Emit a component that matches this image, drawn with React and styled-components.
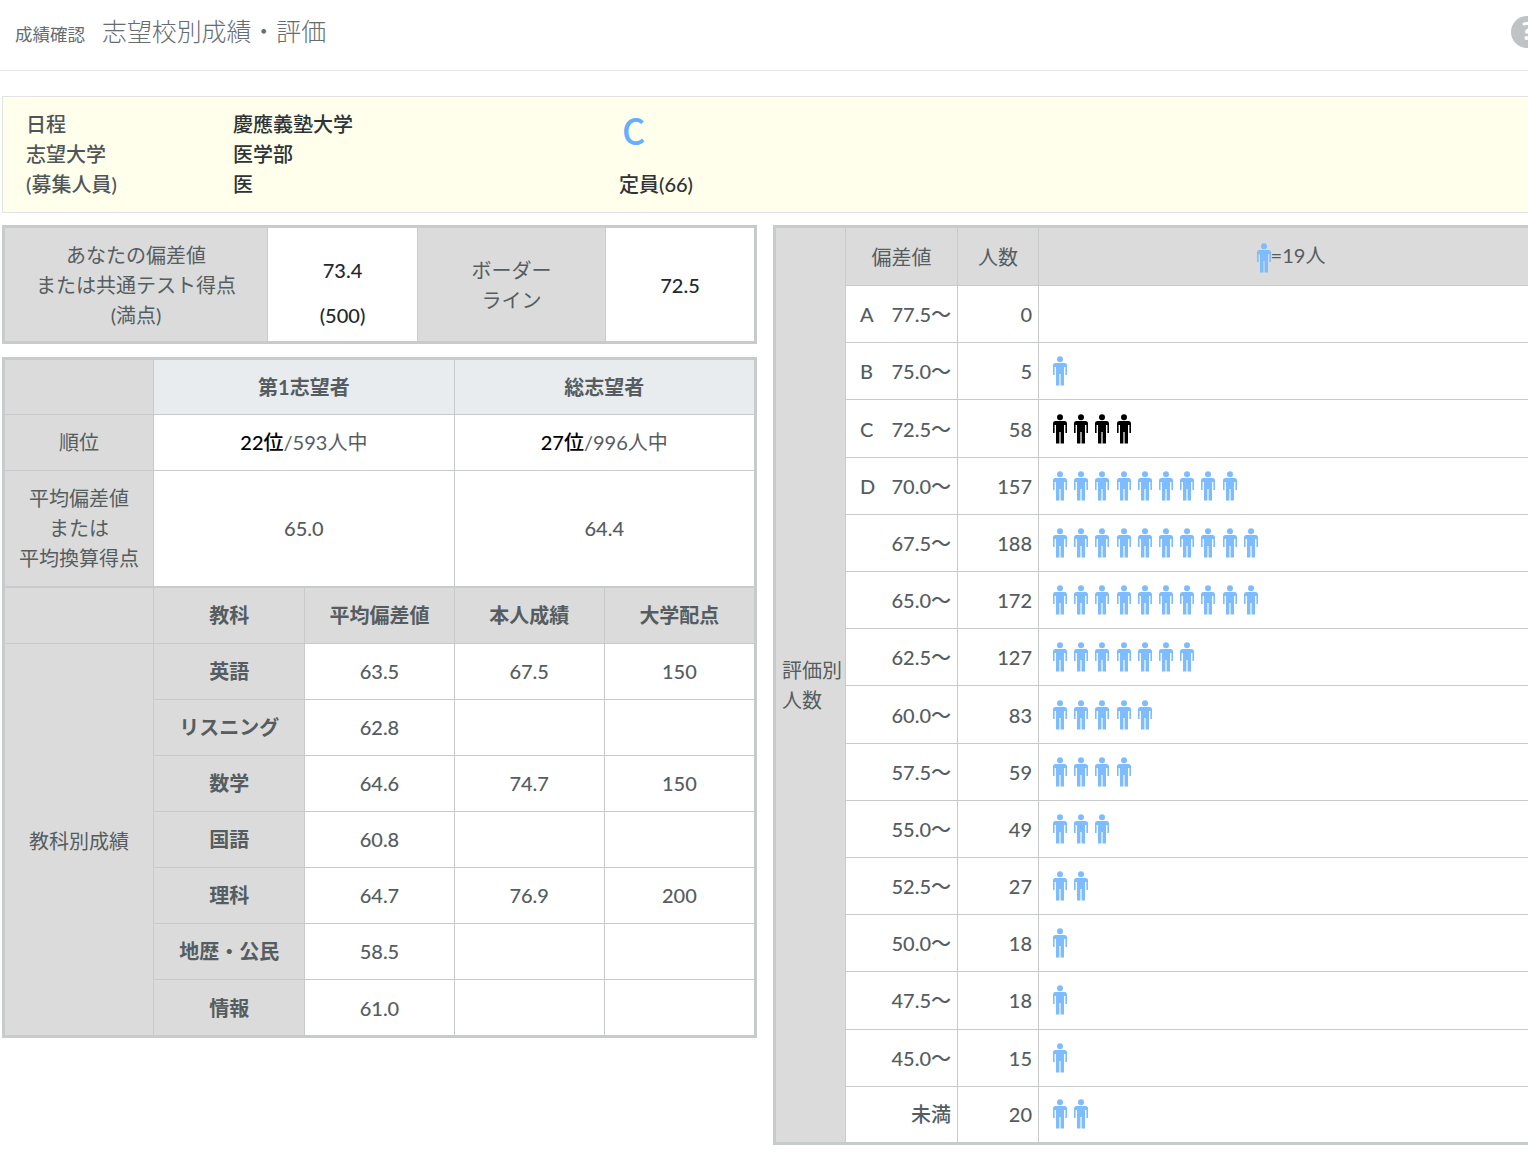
import React from 'react';
import styled, { createGlobalStyle } from 'styled-components';

const line = '#c8cbcb';
const grey = '#dbdbdb';

const GlobalStyle = createGlobalStyle`
  html, body {
    margin: 0;
    overflow: hidden;
    background: #fff;
  }
  body {
    font-family: Lato, "Noto Sans CJK JP", sans-serif;
    font-size: 20px;
    line-height: 30px;
    color: #555d61;
  }
`;

const Page = styled.div`
  width: 1570px;
  height: 1152px;
`;

const Header = styled.header`
  height: 70px;
  padding-left: 15px;
  display: flex;
  align-items: flex-start;
  border-bottom: 1px solid #e7e8e8;
`;

const Crumb = styled.span`
  font-size: 17.5px;
  margin-top: 20px;
  color: #666c70;
`;

const Title = styled.h1`
  margin: 13px 0 0 17px;
  font-size: 24.9px;
  line-height: 36px;
  font-weight: 300;
  color: #666c70;
`;

const Help = styled.span`
  margin: 16px 0 0 1185px;
  width: 32px;
  height: 32px;
  border-radius: 50%;
  background: #bfc3c3;
  color: #fff;
  font-size: 24px;
  font-weight: 900;
  text-align: center;
`;

const Info = styled.section`
  margin: 25px 0 12px 2px;
  height: 117px;
  box-sizing: border-box;
  padding: 12px 23px;
  border: 1px solid #e2e4e4;
  background: #ffffec;
  display: grid;
  grid-template-columns: 207px 386px 1fr;
  grid-template-rows: repeat(3, 30px);
  font-weight: 500;
`;

const Label = styled.div`
  color: #4f5659;
`;

const Value = styled.div`
  color: #2d3336;
`;

const Rating = styled.div`
  grid-row: 1 / span 2;
  grid-column: 3;
  align-self: start;
  padding-left: 3px;
  font-family: "Noto Sans CJK JP", sans-serif;
  font-size: 36px;
  line-height: 40px;
  font-weight: 500;
  color: #66aeff;
`;

const Columns = styled.div`
  display: flex;
  align-items: flex-start;
  margin-left: 2px;
  gap: 16px;
`;

const LeftColumn = styled.div`
  width: 755px;
  display: flex;
  flex-direction: column;
  gap: 13px;
`;

const Table = styled.table`
  width: ${p => p.$width}px;
  table-layout: fixed;
  border-collapse: collapse;
  border: 3px solid ${line};
`;

const Row = styled.tr`
  height: ${p => p.$height}px;
  td {
    padding-bottom: ${p => (p.$lift ? 1 : 0)}px;
  }
`;

const Cell = styled.td`
  padding: 0;
  border: 1px solid ${line};
  text-align: center;
  background: ${p => (p.$head ? grey : p.$pale ? '#e8ecef' : '#fff')};
  font-weight: ${p => (p.$strong ? 700 : 500)};
  ${p => p.$thickTop && `border-top: 2px solid ${line};`}
`;

const HeadText = styled.span`
  font-weight: 400;
`;

const Strong = styled.strong`
  color: #000;
  font-weight: 500;
`;

const Plain = styled.span`
  color: #23282b;
  font-weight: 500;
`;

const ScoreLine = styled.div`
  color: #23282b;
  font-weight: 500;
  margin-top: 15px;
`;

const GradeCell = styled.div`
  display: flex;
  justify-content: space-between;
  padding: 0 6px 0 14px;
  font-weight: 500;
`;

const CountCell = styled(Cell)`
  text-align: right;
  padding-right: 6px;
  font-weight: 500;
`;

const BarCell = styled(Cell)`
  text-align: left;
  padding-left: 14px;
`;

const SideLabel = styled(Cell)`
  text-align: left;
  padding-left: 6px;
`;

const SubjectGroup = styled(Cell)`
  && {
    padding: 2px 0 0;
  }
`;

const People = styled.div`
  display: flex;
  gap: 7.2px;
`;

const LegendIcon = styled.span`
  display: inline-flex;
  vertical-align: middle;
`;

const Person = ({ color = '#7cbcff' }) => (
  <svg width="14" height="30" viewBox="0 0 14 30" fill={color}>
    <circle cx="7" cy="3.2" r="3" />
    <path d="M2.5 7H11.5A2.5 2.5 0 0 1 14 9.5V19H12.4V11H11V29.5H7.6V18H6.4V29.5H3V11H1.6V19H0V9.5A2.5 2.5 0 0 1 2.5 7Z" />
  </svg>
);

const subjects = [
  ['英語', '63.5', '67.5', '150'],
  ['リスニング', '62.8', '', ''],
  ['数学', '64.6', '74.7', '150'],
  ['国語', '60.8', '', ''],
  ['理科', '64.7', '76.9', '200'],
  ['地歴・公民', '58.5', '', ''],
  ['情報', '61.0', '', ''],
];

const grades = [
  ['A', '77.5〜', 0, 0],
  ['B', '75.0〜', 5, 1],
  ['C', '72.5〜', 58, 4, true],
  ['D', '70.0〜', 157, 9],
  ['', '67.5〜', 188, 10],
  ['', '65.0〜', 172, 10],
  ['', '62.5〜', 127, 7],
  ['', '60.0〜', 83, 5],
  ['', '57.5〜', 59, 4],
  ['', '55.0〜', 49, 3],
  ['', '52.5〜', 27, 2],
  ['', '50.0〜', 18, 1],
  ['', '47.5〜', 18, 1],
  ['', '45.0〜', 15, 1],
  ['', '未満', 20, 2],
];

const App = () => (
  <Page>
    <GlobalStyle />
    <Header>
      <Crumb>成績確認</Crumb>
      <Title>志望校別成績・評価</Title>
      <Help>?</Help>
    </Header>
    <Info>
      <Label>日程</Label>
      <Value>慶應義塾大学</Value>
      <Rating>C</Rating>
      <Label>志望大学</Label>
      <Value>医学部</Value>
      <Label>(募集人員)</Label>
      <Value>医</Value>
      <Value>定員(66)</Value>
    </Info>
    <Columns>
      <LeftColumn>
        <Table $width={755}>
          <colgroup>
            <col width="264" />
            <col width="150" />
            <col width="188" />
            <col width="150" />
          </colgroup>
          <tbody>
            <Row $height={116}>
              <Cell $head><HeadText>あなたの偏差値<br />または共通テスト得点<br />(満点)</HeadText></Cell>
              <Cell><ScoreLine>73.4</ScoreLine><ScoreLine>(500)</ScoreLine></Cell>
              <Cell $head><HeadText>ボーダー<br />ライン</HeadText></Cell>
              <Cell><Plain>72.5</Plain></Cell>
            </Row>
          </tbody>
        </Table>
        <Table $width={755}>
          <colgroup>
            <col width="150" />
            <col width="151" />
            <col width="149" />
            <col width="150" />
            <col width="151" />
          </colgroup>
          <tbody>
            <Row $height={56} $lift>
              <Cell $head />
              <Cell $pale $strong colSpan={2}>第1志望者</Cell>
              <Cell $pale $strong colSpan={2}>総志望者</Cell>
            </Row>
            <Row $height={56} $lift>
              <Cell $head><HeadText>順位</HeadText></Cell>
              <Cell colSpan={2}><Strong>22位</Strong><HeadText>/593人中</HeadText></Cell>
              <Cell colSpan={2}><Strong>27位</Strong><HeadText>/996人中</HeadText></Cell>
            </Row>
            <Row $height={116}>
              <Cell $head><HeadText>平均偏差値<br />または<br />平均換算得点</HeadText></Cell>
              <Cell colSpan={2}>65.0</Cell>
              <Cell colSpan={2}>64.4</Cell>
            </Row>
            <Row $height={57}>
              <Cell $head $thickTop />
              <Cell $head $strong $thickTop>教科</Cell>
              <Cell $head $strong $thickTop>平均偏差値</Cell>
              <Cell $head $strong $thickTop>本人成績</Cell>
              <Cell $head $strong $thickTop>大学配点</Cell>
            </Row>
            {subjects.map((s, i) => (
              <Row $height={i === 6 ? 57 : 56} $lift={i < 6} key={s[0]}>
                {i === 0 && <SubjectGroup $head rowSpan={7}><HeadText>教科別成績</HeadText></SubjectGroup>}
                <Cell $head $strong>{s[0]}</Cell>
                <Cell>{s[1]}</Cell>
                <Cell>{s[2]}</Cell>
                <Cell>{s[3]}</Cell>
              </Row>
            ))}
          </tbody>
        </Table>
      </LeftColumn>
      <Table $width={773}>
        <colgroup>
          <col width="71" />
          <col width="112" />
          <col width="81" />
          <col />
        </colgroup>
        <tbody>
          <Row $height={59.1}>
            <SideLabel $head rowSpan={16}><HeadText>評価別<br />人数</HeadText></SideLabel>
            <Cell $head><HeadText>偏差値</HeadText></Cell>
            <Cell $head><HeadText>人数</HeadText></Cell>
            <Cell $head><HeadText><LegendIcon><Person /></LegendIcon>=19人</HeadText></Cell>
          </Row>
          {grades.map(([grade, range, count, icons, mine]) => (
            <Row $height={57.2} key={range}>
              <Cell><GradeCell><span>{grade}</span><span>{range}</span></GradeCell></Cell>
              <CountCell>{count}</CountCell>
              <BarCell>
                <People>
                  {Array.from({ length: icons }, (_, i) => (
                    <Person key={i} color={mine ? '#000' : undefined} />
                  ))}
                </People>
              </BarCell>
            </Row>
          ))}
        </tbody>
      </Table>
    </Columns>
  </Page>
);

export default App;
